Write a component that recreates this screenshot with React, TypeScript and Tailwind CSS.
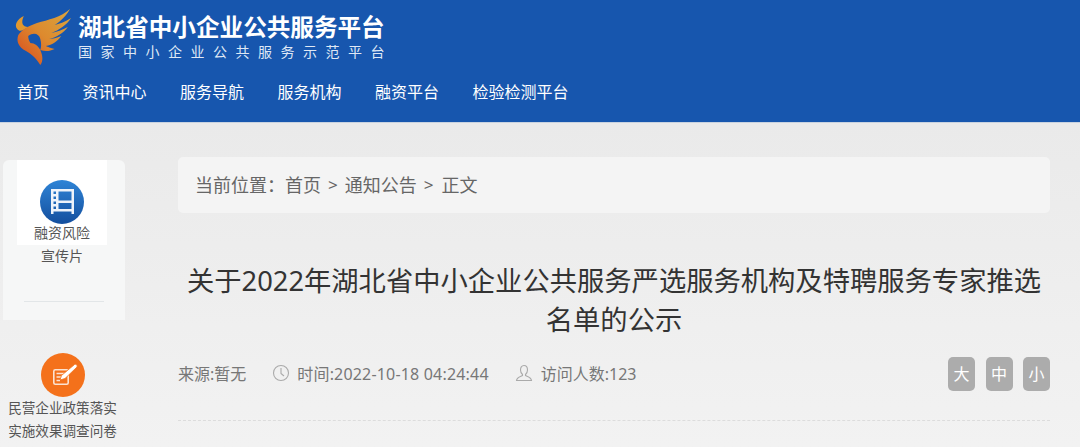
const font = "font-['Noto_Sans','Noto_Sans_CJK_SC',sans-serif]";

const navItems = ["首页", "资讯中心", "服务导航", "服务机构", "融资平台", "检验检测平台"];

function Logo() {
  return (
    <svg className="shrink-0" width="66" height="60" viewBox="0 0 66 60">
      <defs>
        <linearGradient id="wing" x1="0" y1="1" x2="1" y2="0">
          <stop offset="0" stopColor="#d8481f" />
          <stop offset="0.5" stopColor="#dd8a2e" />
          <stop offset="1" stopColor="#d9a63f" />
        </linearGradient>
      </defs>
      <g transform="translate(-6 0) scale(1.1 1)">
        <path d="M18 11C12 14 9 20 12 24C14 27 17 26 22 22C17 22 15 18 18 11Z" fill="#e2982f" />
        <path
          d="M60 4C52 12 40 15 30 18C22 21 16 25 13 30C11 36 13 42 20 46C25 49 29 53 33 60C36 56 35 50 33 45C38 47 42 46 46 44C42 43 40 42 38 41C44 40 49 36 52 31C48 33 44 34 41 34C48 32 54 28 58 22C53 25 48 27 43 28C50 25 57 20 61 13C55 17 50 19 46 20C52 16 57 10 60 4Z"
          fill="url(#wing)"
        />
        <path d="M22 31C27 27 32 29 33 34C34 38 34 42 33 45C31 41 28 38 24 38C23 36 22 34 22 31Z" fill="#1756ae" />
      </g>
    </svg>
  );
}

function FilmIcon() {
  return (
    <svg width="44" height="44" viewBox="0 0 44 44">
      <defs>
        <linearGradient id="blueDisc" x1="0" y1="0" x2="0" y2="1">
          <stop offset="0" stopColor="#2f84d6" />
          <stop offset="1" stopColor="#144f9e" />
        </linearGradient>
      </defs>
      <circle cx="22" cy="22" r="22" fill="url(#blueDisc)" />
      <path d="M11 9H34V34H31.5V31.5H13.5V34H11ZM13.5 11.5V14H16V11.5ZM18.5 11.5V20.5H31.5V11.5ZM13.5 16.5V19H16V16.5ZM13.5 21.5V24H16V21.5ZM18.5 23V29H31.5V23ZM13.5 26.5V29H16V26.5Z" fill="#eef3fa" fillRule="evenodd" />
    </svg>
  );
}

function SurveyIcon() {
  return (
    <svg width="44" height="44" viewBox="0 0 44 44" fill="none">
      <circle cx="22" cy="22" r="22" fill="#f4711b" />
      <rect x="12.8" y="16.8" width="14.4" height="14.4" rx="1.5" stroke="#fbe3d2" strokeWidth="1.6" />
      <path d="M15.5 20.5H24M15.5 24H21M15.5 27.5H19" stroke="#fbe3d2" strokeWidth="1.4" />
      <path d="M19 27L20.5 22.5L33.5 11.5C35 10.5 37 12.5 36 14L24 25.5Z" fill="#ffffff" stroke="#f4711b" strokeWidth="0.8" />
    </svg>
  );
}

function Sidebar() {
  return (
    <aside className="mr-[53px] flex w-[125px] shrink-0 flex-col items-start pt-[37px]">
      <div className="ml-[3px] flex h-[160px] w-[122px] flex-col items-center rounded-t-[6px] bg-[#f6f7f7] pr-[4px] text-[#555]">
        <div className="flex h-[85px] w-[90px] flex-col items-center bg-white pt-[20px]">
          <FilmIcon />
          <span className="-mt-[1px] text-[14px] leading-[20px]">融资风险</span>
        </div>
        <span className="mt-[1px] text-[14px] leading-[20px]">宣传片</span>
        <div className="ml-[4px] mt-[35px] h-px w-[80px] bg-[#e2e6e8]" />
      </div>
      <div className="mt-[33px] flex w-[125px] flex-col items-center text-[#555]">
        <SurveyIcon />
        <span className="-mt-[1px] whitespace-nowrap text-[13.6px] leading-[23px]">民营企业政策落实</span>
        <span className="whitespace-nowrap text-[13.6px] leading-[23px]">实施效果调查问卷</span>
      </div>
    </aside>
  );
}

function Meta() {
  return (
    <div className="mt-[18px] flex h-[34px] items-center justify-between">
      <div className="flex items-center text-[16px] text-[#777]">
        <span>来源:暂无</span>
        <svg className="-mt-[3px] ml-[26px]" width="18" height="18" viewBox="0 0 18 18" fill="none" stroke="#aaa" strokeWidth="1.1">
          <circle cx="9" cy="9" r="7.5" />
          <path d="M9 4V9.5L12 12" />
        </svg>
        <span className="ml-[7px] tracking-[0.18px]">时间:2022-10-18 04:24:44</span>
        <svg className="-mt-[3px] ml-[26px]" width="18" height="18" viewBox="0 0 18 18" fill="none" stroke="#aaa" strokeWidth="1.1">
          <path d="M9 1.5C11.5 1.5 12.5 3.5 12.5 6C12.5 8 11.5 9.5 10.5 10.5V11.5C12 12.5 16 13 16.5 16.5H1.5C2 13 6 12.5 7.5 11.5V10.5C6.5 9.5 5.5 8 5.5 6C5.5 3.5 6.5 1.5 9 1.5Z" />
        </svg>
        <span className="ml-[8px]">访问人数:123</span>
      </div>
      <div className="flex gap-[10.5px]">
        {["大", "中", "小"].map((s) => (
          <span key={s} className="flex h-[34px] w-[27px] items-center justify-center rounded-[5px] bg-[#acacac] text-[16px] text-white">
            {s}
          </span>
        ))}
      </div>
    </div>
  );
}

export default function App() {
  return (
    <div className={`${font} h-[447px] w-[1080px] overflow-hidden bg-gradient-to-b from-[#e7e7e7] to-[#f2f2f2]`}>
      <header className="h-[123px] border-b border-[#c9d3e0] bg-[#1756ae] pl-[10px] pt-[5px]">
        <div className="flex items-start">
          <Logo />
          <div className="ml-[2px] flex flex-col pt-[7px] text-white">
            <span className="whitespace-nowrap text-[23.6px] font-bold leading-[30px]">湖北省中小企业公共服务平台</span>
            <span className="mt-[1px] whitespace-nowrap text-[14px] leading-[18px] tracking-[8.5px] text-[#dfe8f5]">国家中小企业公共服务示范平台</span>
          </div>
        </div>
        <nav className="mt-[15px] flex gap-[33.5px] pl-[7px] text-[16px] leading-[24px] text-white">
          {navItems.map((n) => (
            <a key={n} href="#">{n}</a>
          ))}
        </nav>
      </header>
      <div className="flex">
        <Sidebar />
        <main className="w-[872px] pt-[34px]">
          <div className="flex h-[56px] items-center rounded-[5px] bg-[#f4f4f4] pl-[17px] text-[18px] text-[#666]">
            <span>当前位置：</span>
            <span>首页</span>
            <span className="mx-[7px] text-[17px]">&gt;</span>
            <span>通知公告</span>
            <span className="ml-[7px] mr-[8px] text-[17px]">&gt;</span>
            <span>正文</span>
          </div>
          <h1 className="mt-[48px] text-center text-[27.3px] font-normal leading-[39px] text-[#333]">
            关于2022年湖北省中小企业公共服务严选服务机构及特聘服务专家推选名单的公示
          </h1>
          <Meta />
          <div className="mt-[29px] border-b border-dashed border-[#dcdcdc]" />
        </main>
      </div>
    </div>
  );
}
